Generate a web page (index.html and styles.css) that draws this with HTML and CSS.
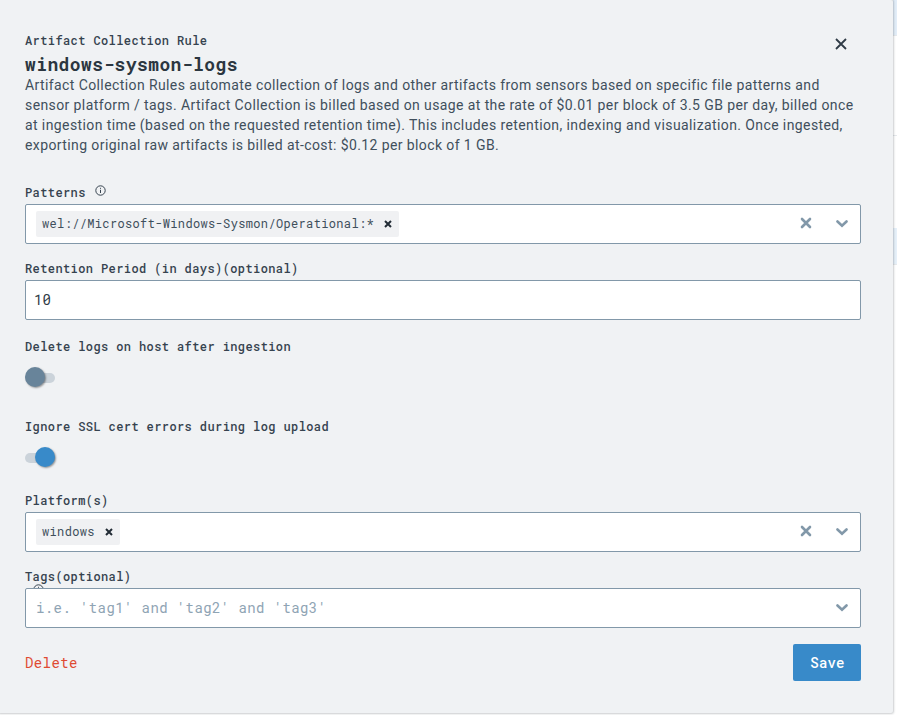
FILE: index.html
```html
<!DOCTYPE html>
<html lang="en">
<head>
<meta charset="utf-8">
<title>Artifact Collection Rule</title>
<link rel="stylesheet" href="styles.css">
</head>
<body>
<div class="page">
  <main class="dialog">
    <header class="header">
      <div class="heading">
        <div class="eyebrow">Artifact Collection Rule</div>
        <h1 class="title">windows-sysmon-logs</h1>
      </div>
      <svg class="close" width="12" height="12" viewBox="0 0 12 12"><path d="M1 1 11 11M11 1 1 11"/></svg>
    </header>
    <p class="description">Artifact Collection Rules automate collection of logs and other artifacts from sensors based on specific file patterns and<br>sensor platform / tags. Artifact Collection is billed based on usage at the rate of $0.01 per block of 3.5 GB per day, billed once<br>at ingestion time (based on the requested retention time). This includes retention, indexing and visualization. Once ingested,<br>exporting original raw artifacts is billed at-cost: $0.12 per block of 1 GB.</p>

    <section class="field field-patterns">
      <div class="label">Patterns <svg class="info" width="11" height="11" viewBox="0 0 11 11"><circle cx="5.5" cy="5.5" r="4.7"/><path d="M5.5 4.8V8M5.5 2.8V3.8"/></svg></div>
      <div class="control">
        <span class="chip">wel://Microsoft-Windows-Sysmon/Operational:*<svg class="remove" width="8" height="8" viewBox="0 0 8 8"><path d="M1 1 7 7M7 1 1 7"/></svg></span>
        <span class="actions">
          <svg class="clear" width="12" height="12" viewBox="0 0 12 12"><path d="M2 2 10 10M10 2 2 10"/></svg>
          <svg class="chevron" width="12" height="8" viewBox="0 0 12 8"><path d="M1.5 1.5 6 5.7 10.5 1.5"/></svg>
        </span>
      </div>
    </section>

    <section class="field field-retention">
      <div class="label">Retention Period (in days)(optional)</div>
      <div class="control input">10</div>
    </section>

    <section class="switch-field">
      <div class="label">Delete logs on host after ingestion</div>
      <div class="switch"><span class="thumb"></span></div>
    </section>

    <section class="switch-field">
      <div class="label">Ignore SSL cert errors during log upload</div>
      <div class="switch switch-on"><span class="thumb"></span></div>
    </section>

    <section class="field field-platforms">
      <div class="label">Platform(s)</div>
      <div class="control">
        <span class="chip">windows<svg class="remove" width="8" height="8" viewBox="0 0 8 8"><path d="M1 1 7 7M7 1 1 7"/></svg></span>
        <span class="actions">
          <svg class="clear" width="12" height="12" viewBox="0 0 12 12"><path d="M2 2 10 10M10 2 2 10"/></svg>
          <svg class="chevron" width="12" height="8" viewBox="0 0 12 8"><path d="M1.5 1.5 6 5.7 10.5 1.5"/></svg>
        </span>
      </div>
    </section>

    <section class="field field-tags">
      <div class="label">Tags(optional)</div>
      <svg class="info info-under" width="11" height="11" viewBox="0 0 11 11"><circle cx="5.5" cy="5.5" r="4.7"/><path d="M5.5 4.8V8M5.5 2.8V3.8"/></svg>
      <div class="control">
        <span class="placeholder">i.e. 'tag1' and 'tag2' and 'tag3'</span>
        <span class="actions"><svg class="chevron" width="12" height="8" viewBox="0 0 12 8"><path d="M1.5 1.5 6 5.7 10.5 1.5"/></svg></span>
      </div>
    </section>

    <footer class="footer">
      <span class="delete">Delete</span>
      <button class="save" type="button">Save</button>
    </footer>
  </main>
  <aside class="backdrop">
    <div class="row row-head"></div>
    <div class="row row-a"></div>
    <div class="row row-b"></div>
    <div class="row row-selected"></div>
  </aside>
</div>
</body>
</html>
```
FILE: styles.css
```css
* { box-sizing: border-box; }

body {
  margin: 0;
  background: #fff;
  color: #404f5c;
  font-family: Roboto, sans-serif;
}

.page {
  display: flex;
  height: 715px;
  overflow: hidden;
}

.dialog {
  position: relative;
  z-index: 1;
  width: 893px;
  height: 713px;
  padding: 32px 32px 0 25px;
  background: #f0f2f4;
  border-radius: 0 2px 2px 0;
  box-shadow: 0 0 2px 1px rgba(40, 50, 60, .24);
}

.backdrop { width: 4px; }
.row { border-bottom: 1px solid #e6e9ec; }
.row-head { height: 36px; background: #e2edf8; }
.row-a { height: 100px; }
.row-b { height: 92px; border-bottom: 0; }
.row-selected { height: 37px; background: #e6f0f9; }

.header { display: flex; justify-content: space-between; }

.eyebrow, .title, .label, .chip, .input, .placeholder, .delete, .save {
  font-family: "Roboto Mono", "DejaVu Sans Mono", monospace;
}

.eyebrow, .label {
  height: 16px;
  font-size: 12px;
  line-height: 16px;
  letter-spacing: .4px;
  font-weight: 500;
  white-space: pre;
  color: #36434f;
}

.title {
  margin: 4px 0 0;
  height: 23px;
  font-size: 18px;
  line-height: 24px;
  letter-spacing: .4px;
  font-weight: 700;
  color: #2b3640;
}

.close {
  margin: 6px 14px 0 0;
  fill: none;
  stroke: #2f3b46;
  stroke-width: 1.8;
}

.description {
  margin: 0;
  height: 80px;
  font-size: 14px;
  line-height: 20px;
  letter-spacing: .4px;
  white-space: nowrap;
}

.info { fill: none; stroke: #36434f; stroke-width: 1; }
.label .info { margin-left: 1.5px; vertical-align: 1.5px; }

.field { display: flex; flex-direction: column; }
.field .label { margin-bottom: 4px; }
.field-patterns { margin-top: 29px; }
.field-retention { margin-top: 16px; }
.field-platforms { margin-top: 12px; }
.field-tags { position: relative; margin-top: 16px; }

.info-under { position: absolute; top: 16px; left: 8px; }

.control {
  position: relative;
  display: flex;
  align-items: center;
  height: 40px;
  padding: 0 12px 0 10px;
  background: #fff;
  border: 1px solid #8298a9;
  border-radius: 2px;
}

.input {
  padding-left: 8px;
  padding-bottom: 1px;
  font-size: 14px;
  letter-spacing: .1px;
  color: #2f3b46;
}

.chip {
  display: flex;
  align-items: center;
  gap: 10px;
  height: 26px;
  padding: 0 7px 1px 6px;
  background: #f0f1f3;
  border-radius: 2px;
  font-size: 12px;
  line-height: 15px;
  letter-spacing: .345px;
}

.remove { position: relative; top: .5px; fill: none; stroke: #222c35; stroke-width: 2; }

.actions {
  display: flex;
  align-items: center;
  gap: 24px;
  margin-left: auto;
}

.clear, .chevron {
  position: relative;
  top: -.5px;
  fill: none;
  stroke: #8298a9;
  stroke-width: 2.6;
  stroke-linecap: round;
}

.clear { top: -1px; }

.placeholder { padding-bottom: 1px; font-size: 14px; letter-spacing: .4px; color: #8fa4b4; }

.switch-field { height: 80px; padding-top: 18px; }

.switch {
  display: flex;
  align-items: center;
  width: 30px;
  height: 10px;
  margin-top: 19px;
  background: #cbd3da;
  border-radius: 5px;
}

.thumb {
  flex: none;
  width: 20px;
  height: 20px;
  margin-top: -2px;
  background: #68849a;
  border-radius: 50%;
  box-shadow: 1px 1px 2px rgba(0, 0, 0, .4);
}

.switch-on .thumb { margin-left: 10px; background: #388ac9; }

.footer {
  display: flex;
  align-items: center;
  justify-content: space-between;
  margin-top: 16px;
}

.delete { font-size: 14px; letter-spacing: .4px; color: #df4a32; }

.save {
  width: 68px;
  height: 37px;
  padding: 0 0 0 1px;
  border: 0;
  border-radius: 2px;
  background: #388ac9;
  color: #fff;
  font-size: 14px;
  font-weight: 500;
  letter-spacing: .2px;
}
```
